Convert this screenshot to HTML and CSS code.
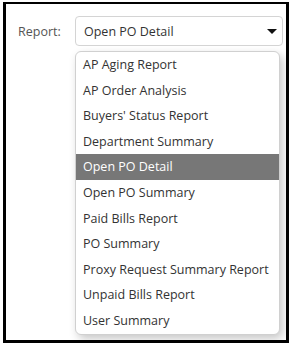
FILE: index.html
```html
<!DOCTYPE html>
<html>
<head>
<meta charset="utf-8">
<link rel="stylesheet" href="styles.css">
</head>
<body>
<div class="frame">
	<div class="field">
		<label class="field_label">Report:</label>
		<div class="select">
			<span class="select_value">Open PO Detail</span>
			<span class="select_caret"></span>
		</div>
	</div>
	<ul class="options">
		<li>AP Aging Report</li>
		<li>AP Order Analysis</li>
		<li>Buyers' Status Report</li>
		<li>Department Summary</li>
		<li class="active">Open PO Detail</li>
		<li>Open PO Summary</li>
		<li>Paid Bills Report</li>
		<li>PO Summary</li>
		<li>Proxy Request Summary Report</li>
		<li>Unpaid Bills Report</li>
		<li>User Summary</li>
	</ul>
</div>
</body>
</html>
```

FILE: styles.css
```css
body
{
	margin: 0;
	background: #fff;
	font-family: "Open Sans", "Liberation Sans", sans-serif;
	font-size: 12.5px;
	color: #333;
}

.frame
{
	width: 280px;
	height: 336px;
	margin: 2px 0 0 3px;
	border: 3px solid #000;
	border-top-width: 2px;
	overflow: hidden;
}

.field
{
	display: flex;
	align-items: center;
	margin: 12px 0 0 12px;
}

.field_label
{
	width: 57px;
	color: #555;
}

.select
{
	display: flex;
	align-items: center;
	justify-content: space-between;
	width: 194px;
	height: 28px;
	padding: 0 4px 0 8px;
	border: 1px solid #d4d4d4;
	border-radius: 4px;
}

.select_caret
{
	width: 0;
	height: 0;
	border-style: solid;
	border-width: 5px 5px 0 5px;
	border-color: #111 transparent transparent;
	margin-right: 1px;
}

.options
{
	list-style: none;
	width: 203px;
	margin: 5px 0 0 69px;
	padding: 0;
	border: 1px solid #d0d0d0;
	border-radius: 6px;
	box-shadow: 3px 4px 10px rgba(0, 0, 0, 0.22);
	background: #fff;
	overflow: hidden;
}

.options li
{
	height: 25.6px;
	line-height: 25.6px;
	padding-left: 7px;
	white-space: nowrap;
}

.options li.active
{
	background: #777;
	color: #fff;
}
```
